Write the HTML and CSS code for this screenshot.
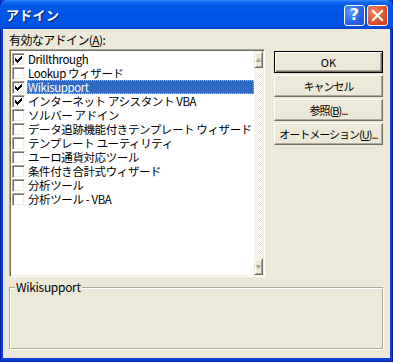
FILE: index.html
```html
<!DOCTYPE html>
<html lang="ja">
<head>
<meta charset="utf-8">
<link rel="stylesheet" href="styles.css">
</head>
<body>
<div class="window">
  <div class="titlebar">
    <span class="title">アドイン</span>
    <div class="caption-btns">
      <span class="cap-btn help">?</span>
      <span class="cap-btn close"><svg width="13" height="13" viewBox="0 0 13 13"><path d="M2 2 L11 11 M11 2 L2 11" stroke="#fff" stroke-width="2.2" stroke-linecap="square"/></svg></span>
    </div>
  </div>
  <div class="client">
    <div class="top">
      <div class="left">
        <div class="label">有効なアドイン(<u>A</u>):</div>
        <div class="listbox">
          <div class="items">
            <div class="row"><span class="cb checked"></span><span class="txt">Drillthrough</span></div>
            <div class="row"><span class="cb"></span><span class="txt">Lookup ウィザード</span></div>
            <div class="row sel"><span class="cb checked"></span><span class="txt">Wikisupport</span></div>
            <div class="row"><span class="cb checked"></span><span class="txt">インターネット アシスタント VBA</span></div>
            <div class="row"><span class="cb"></span><span class="txt">ソルバー アドイン</span></div>
            <div class="row"><span class="cb"></span><span class="txt">データ追跡機能付きテンプレート ウィザード</span></div>
            <div class="row"><span class="cb"></span><span class="txt">テンプレート ユーティリティ</span></div>
            <div class="row"><span class="cb"></span><span class="txt">ユーロ通貨対応ツール</span></div>
            <div class="row"><span class="cb"></span><span class="txt">条件付き合計式ウィザード</span></div>
            <div class="row"><span class="cb"></span><span class="txt">分析ツール</span></div>
            <div class="row"><span class="cb"></span><span class="txt">分析ツール - VBA</span></div>
          </div>
          <div class="scrollbar">
            <div class="arrow up"><svg width="7" height="4" viewBox="0 0 7 4"><path d="M3.5 0 L7 4 L0 4 Z" fill="#aca899"/></svg></div>
            <div class="track"></div>
            <div class="arrow down"><svg width="7" height="4" viewBox="0 0 7 4"><path d="M0 0 L7 0 L3.5 4 Z" fill="#aca899"/></svg></div>
          </div>
        </div>
      </div>
      <div class="buttons">
        <div class="btn default">OK</div>
        <div class="btn">キャンセル</div>
        <div class="btn">参照(<u>B</u>)...</div>
        <div class="btn">オートメーション(<u>U</u>)...</div>
      </div>
    </div>
    <div class="group">
      <span class="legend">Wikisupport</span>
    </div>
  </div>
</div>
</body>
</html>
```

FILE: styles.css
```css
html, body {
  margin: 0;
  padding: 0;
  background: #ece9d8;
}
body {
  font-family: "Noto Sans CJK JP", "Noto Sans", sans-serif;
  font-size: 12px;
  color: #000;
}
.window {
  width: 393px;
  height: 362px;
  box-sizing: border-box;
  background: #0841d9;
  box-shadow: inset 1px 0 #001ea0, inset -1px 0 #001ea0, inset 0 -1px #001ea0;
  display: flex;
  flex-direction: column;
}
.titlebar {
  height: 29px;
  flex: none;
  display: flex;
  align-items: center;
  justify-content: space-between;
  padding: 0 5px 0 6px;
  background: linear-gradient(to bottom, #3d8eff 0px, #1468f5 2px, #0058ea 6px, #0054e3 16px, #0055e8 24px, #0046d6 29px);
  border-radius: 7px 7px 0 0;
}
.title {
  color: #fff;
  font-weight: bold;
  font-size: 13px;
  letter-spacing: 0.3px;
  text-shadow: 1px 1px #0a1e6e;
}
.caption-btns {
  display: flex;
  gap: 2px;
  margin-top: 1px;
}
.cap-btn {
  width: 21px;
  height: 21px;
  box-sizing: border-box;
  border: 1px solid #fff;
  border-radius: 3px;
  display: flex;
  align-items: center;
  justify-content: center;
  color: #fff;
}
.help {
  background: radial-gradient(circle at 30% 30%, #5a9cff, #2660e8 60%, #1a4fd6);
  font-family: "DejaVu Sans", sans-serif;
  font-weight: bold;
  font-size: 16px;
  line-height: 1;
}
.close {
  background: radial-gradient(circle at 30% 30%, #f0885f, #e0502a 60%, #c83d18);
}
.client {
  flex: 1;
  margin: 0 3px 4px 3px;
  background: #ece9d8;
  padding: 4px 6px 0 6px;
  display: flex;
  flex-direction: column;
}
.top {
  display: flex;
  align-items: flex-start;
}
.left {
  width: 256px;
}
.label {
  height: 14px;
  line-height: 14px;
  margin-bottom: 2px;
  letter-spacing: -0.6px;
}
.listbox {
  height: 228px;
  box-sizing: border-box;
  background: #fff;
  border: 1px solid;
  border-color: #aca899 #fff #fff #aca899;
  box-shadow: inset 1px 1px #716f64, inset -1px -1px #f1efe2;
  display: flex;
  padding: 1px;
}
.items {
  flex: 1;
  padding-top: 1px;
}
.row {
  height: 14px;
  display: flex;
  align-items: center;
  padding-left: 1px;
}
.cb {
  width: 13px;
  height: 13px;
  box-sizing: border-box;
  background: #fff;
  border: 1px solid;
  border-color: #aca899 #fff #fff #aca899;
  box-shadow: inset 1px 1px #716f64, inset -1px -1px #f1efe2;
  margin-right: 2px;
  position: relative;
  flex: none;
}
.cb.checked::after {
  content: "";
  position: absolute;
  left: 2px;
  top: 2px;
  width: 7px;
  height: 7px;
  background: url("data:image/svg+xml,%3Csvg xmlns='http://www.w3.org/2000/svg' width='7' height='7'%3E%3Cpath d='M0 2h1v1h1v1h1V3h1V2h1V1h1V0h1v3h-1v1h-1v1h-1v1h-1v1h-1V6H1V5H0z' fill='%23000'/%3E%3C/svg%3E") no-repeat;
}
.txt {
  height: 14px;
  line-height: 14px;
  padding: 0 2px 0 1px;
  font-size: 11.5px;
  letter-spacing: -0.4px;
  white-space: nowrap;
}
.row.sel .txt {
  flex: 1;
  background: #316ac5;
  color: #fff;
  outline: 1px dotted #f0c040;
  outline-offset: -1px;
}
.scrollbar {
  width: 17px;
  display: flex;
  flex-direction: column;
}
.arrow {
  height: 17px;
  box-sizing: border-box;
  background: #ece9d8;
  border: 1px solid;
  border-color: #ece9d8 #716f64 #716f64 #ece9d8;
  box-shadow: inset 1px 1px #fff, inset -1px -1px #aca899;
  display: flex;
  align-items: center;
  justify-content: center;
}
.track {
  flex: 1;
  background: conic-gradient(#fff 25%, #ece9d8 0 50%, #fff 0 75%, #ece9d8 0) 0 0 / 2px 2px;
}
.buttons {
  margin-left: 9px;
  margin-top: 18px;
  width: 109px;
  display: flex;
  flex-direction: column;
  gap: 2px;
}
.btn {
  height: 22px;
  box-sizing: border-box;
  background: #ece9d8;
  border: 1px solid;
  border-color: #fff #716f64 #716f64 #fff;
  box-shadow: inset -1px -1px #aca899;
  display: flex;
  align-items: center;
  justify-content: center;
  font-size: 11px;
  letter-spacing: -1px;
  white-space: nowrap;
}
.btn.default {
  border-color: #000;
  box-shadow: inset 1px 1px #fff, inset -1px -1px #716f64, inset -2px -2px #aca899;
  letter-spacing: 0;
}
.group {
  margin-top: 10px;
  height: 63px;
  box-sizing: border-box;
  border: 1px solid;
  border-color: #aca899 #fff #fff #aca899;
  box-shadow: inset 1px 1px #fff, inset -1px -1px #aca899;
  position: relative;
}
.legend {
  position: absolute;
  left: 5px;
  top: -8px;
  padding: 0 1px;
  background: #ece9d8;
  line-height: 14px;
  letter-spacing: -0.3px;
}
```
